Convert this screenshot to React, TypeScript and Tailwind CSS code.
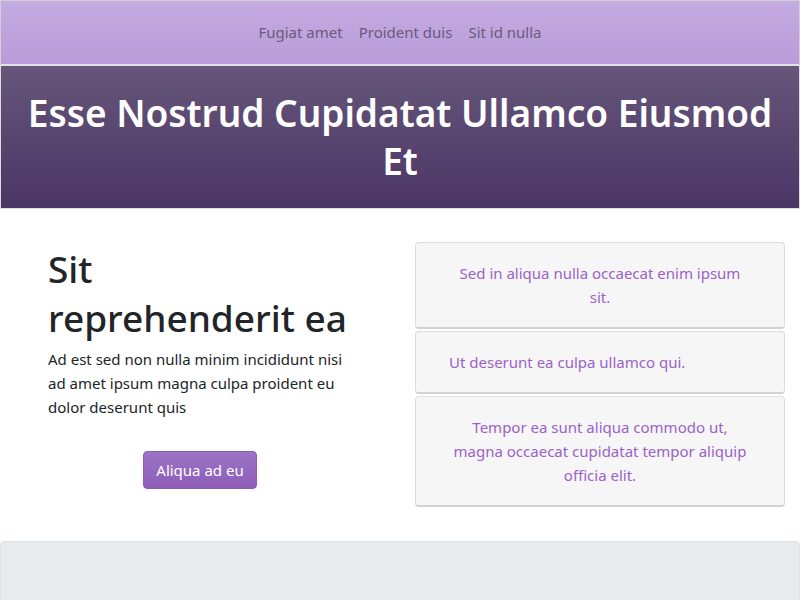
export default function App() {
    const font = { fontFamily: '"Noto Sans", "Open Sans", sans-serif' };
    return (
        <div className="min-h-[600px] bg-white" style={font}>
            <nav className="h-[66px] border border-[#d4cfd8] border-b-2 border-b-[#e4e0e8] bg-gradient-to-b from-[#c4abe0] to-[#b99bd9] flex items-center justify-center gap-4">
                <a className="text-[15px] text-[#6b5a7c]">Fugiat amet</a>
                <a className="text-[15px] text-[#6b5a7c]">Proident duis</a>
                <a className="text-[15px] text-[#6b5a7c]">Sit id nulla</a>
            </nav>

            <header className="h-[143px] border-x border-b border-[#dcdcdc] bg-gradient-to-b from-[#665679] to-[#4b3566] flex items-center justify-center px-4">
                <h1 className="text-center text-[37px] leading-[48px] font-semibold text-white">
                    Esse Nostrud Cupidatat Ullamco Eiusmod Et
                </h1>
            </header>

            <main className="flex pt-[33px] pb-[34px]">
                <div className="w-[400px] px-12 flex flex-col">
                    <h2 className="text-[37px] leading-[49px] font-medium text-[#212529] mt-[2px]">
                        Sit
                        <br />
                        reprehenderit ea
                    </h2>
                    <p className="mt-[5px] text-[15px] leading-6 text-[#212529]">
                        Ad est sed non nulla minim incididunt nisi ad amet ipsum magna culpa proident eu dolor deserunt quis
                    </p>
                    <div className="mt-8 flex justify-center">
                        <button className="h-[38px] px-3 rounded border border-[#8a5cb5] bg-gradient-to-b from-[#9c74c5] to-[#8e5cb8] text-white text-[15px]">
                            Aliqua ad eu
                        </button>
                    </div>
                </div>

                <div className="w-[400px] px-[15px] flex flex-col gap-[2px]">
                    <div className="rounded border border-[#dddddd] border-b-[#d2d2d2] border-b-2 bg-[#f6f6f6] px-[33px] py-[18px] text-center text-[15px] leading-6 text-[#9a62c8]">
                        Sed in aliqua nulla occaecat enim ipsum sit.
                    </div>
                    <div className="rounded border border-[#dddddd] border-b-[#d2d2d2] border-b-2 bg-[#f6f6f6] px-[33px] py-[18px] text-left text-[15px] leading-6 text-[#9a62c8]">
                        Ut deserunt ea culpa ullamco qui.
                    </div>
                    <div className="rounded border border-[#dddddd] border-b-[#d2d2d2] border-b-2 bg-[#f6f6f6] px-[33px] py-[18px] text-center text-[15px] leading-6 text-[#9a62c8]">
                        Tempor ea sunt aliqua commodo ut, magna occaecat cupidatat tempor aliquip officia elit.
                    </div>
                </div>
            </main>

            <footer className="h-[120px] rounded-t border border-[#dee2e6] bg-[#e9ecef]" />
        </div>
    );
}
